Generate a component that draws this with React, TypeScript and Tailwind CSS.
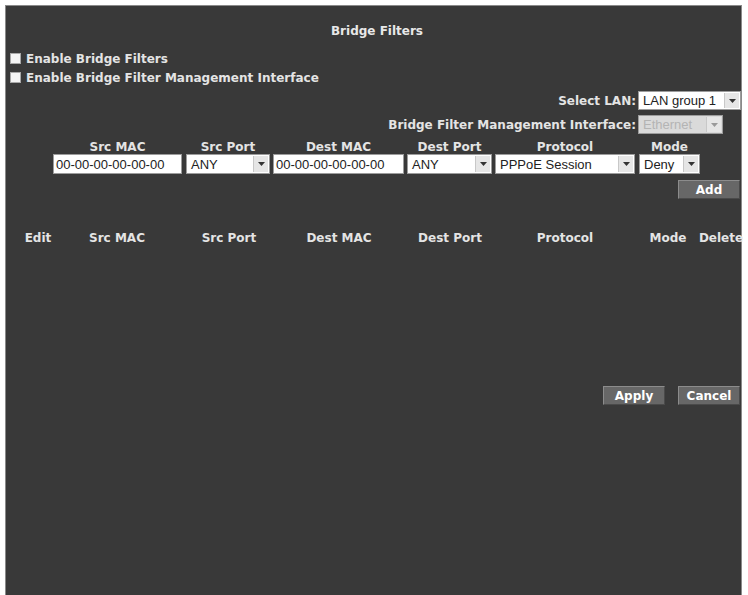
import React from "react";

const label = "font-['DejaVu_Sans',sans-serif] font-bold text-[12px] leading-[14px] text-[#e4e4e4] whitespace-nowrap";
const field = "font-['Liberation_Sans',Arial,sans-serif] text-[13px] text-[#222]";

function Arrow({ disabled = false }: { disabled?: boolean }) {
  return (
    <div className="flex h-full w-[15px] shrink-0 items-center justify-center border-l border-[#c8c8c8] bg-[#e6e6e6]">
      <svg width="7" height="4" viewBox="0 0 7 4">
        <path d="M0 0h7L3.5 4z" fill={disabled ? "#9a9a9a" : "#333"} />
      </svg>
    </div>
  );
}

function SelectBox({
  value,
  width,
  height = "h-[20px]",
  disabled = false,
}: {
  value: string;
  width: string;
  height?: string;
  disabled?: boolean;
}) {
  return (
    <div
      className={`${width} ${height} flex items-stretch border border-[#9c9c9c] p-[1px] ${
        disabled ? "bg-[#dadada]" : "bg-white"
      }`}
    >
      <div
        className={`${field} flex flex-1 items-center overflow-hidden whitespace-nowrap pl-[3px] leading-none ${
          disabled ? "text-[#b4b4b4]" : ""
        }`}
      >
        {value}
      </div>
      <Arrow disabled={disabled} />
    </div>
  );
}

function TextBox({ value, width }: { value: string; width: string }) {
  return (
    <div
      className={`${width} ${field} flex h-[20px] items-center overflow-hidden whitespace-nowrap border border-[#9c9c9c] bg-white pl-[2px] leading-none`}
    >
      {value}
    </div>
  );
}

function Button({ text, width = "w-[62px]" }: { text: string; width?: string }) {
  return (
    <div
      className={`${width} ${label} flex h-[19px] items-center justify-center border border-t-[#8c8c8c] border-l-[#8c8c8c] border-r-[#4a4a4a] border-b-[#4a4a4a] bg-[#676767] text-white`}
    >
      {text}
    </div>
  );
}

function Check({ text }: { text: string }) {
  return (
    <div className="flex h-[19px] items-center pl-[4px]">
      <div className="h-[11px] w-[11px] border border-[#a8a8a8] bg-[#f4f4f4]" />
      <span className={`${label} ml-[5px]`}>{text}</span>
    </div>
  );
}

const entryCols = [
  { head: "Src MAC", el: <TextBox value="00-00-00-00-00-00" width="w-[129px]" />, ml: "ml-0" },
  { head: "Src Port", el: <SelectBox value="ANY" width="w-[84px]" />, ml: "ml-[4px]" },
  { head: "Dest MAC", el: <TextBox value="00-00-00-00-00-00" width="w-[131px]" />, ml: "ml-[3px]" },
  { head: "Dest Port", el: <SelectBox value="ANY" width="w-[85px]" />, ml: "ml-[3px]" },
  { head: "Protocol", el: <SelectBox value="PPPoE Session" width="w-[140px]" />, ml: "ml-[3px]" },
  { head: "Mode", el: <SelectBox value="Deny" width="w-[61px]" />, ml: "ml-[4px]" },
];

const tableCols = [
  { head: "Edit", w: "w-[36px]" },
  { head: "Src MAC", w: "w-[122px]" },
  { head: "Src Port", w: "w-[102px]" },
  { head: "Dest MAC", w: "w-[118px]" },
  { head: "Dest Port", w: "w-[104px]" },
  { head: "Protocol", w: "w-[126px]" },
  { head: "Mode", w: "w-[80px]" },
  { head: "Delete", w: "w-[26px]" },
];

export default function App() {
  return (
    <div className="h-[595px] w-[748px] overflow-hidden bg-white pl-[5px] pt-[5px]">
      <div className="flex h-[592px] w-[737px] flex-col border border-[#8a8a8a] bg-[#393939]">
        {/* heading */}
        <div className={`${label} mt-[17px] h-[16px] pl-[7px] text-center leading-[16px] text-[#e8e8e8]`}>
          Bridge Filters
        </div>

        {/* toggles */}
        <div className="mt-[10px] flex flex-col">
          <Check text="Enable Bridge Filters" />
          <Check text="Enable Bridge Filter Management Interface" />
        </div>

        {/* LAN selection */}
        <div className="mt-[4px] flex h-[19px] items-center justify-end">
          <span className={`${label} mr-[2px]`}>Select LAN:</span>
          <SelectBox value="LAN group 1" width="w-[103px]" height="h-[19px]" />
        </div>
        <div className="mt-[5px] flex h-[19px] items-center justify-end pr-[18px]">
          <span className={`${label} mr-[2px]`}>Bridge Filter Management Interface:</span>
          <SelectBox value="Ethernet" width="w-[85px]" height="h-[19px]" disabled />
        </div>

        {/* new filter entry */}
        <div className="mt-[6px] flex pl-[47px]">
          {entryCols.map((c) => (
            <div key={c.head} className={`${c.ml} flex flex-col items-center`}>
              <span className={`${label} h-[14px]`}>{c.head}</span>
              {c.el}
            </div>
          ))}
        </div>

        <div className="mt-[6px] flex justify-end pr-[1px]">
          <Button text="Add" />
        </div>

        {/* filter table */}
        <div className="mt-[31px] flex h-[16px] items-center pl-[14px]">
          {tableCols.map((c) => (
            <div key={c.head} className={`${c.w} flex shrink-0 justify-center`}>
              <span className={label}>{c.head}</span>
            </div>
          ))}
        </div>

        <div className="mt-[140px] flex justify-end gap-[13px] pr-[1px]">
          <Button text="Apply" />
          <Button text="Cancel" />
        </div>
      </div>
    </div>
  );
}
